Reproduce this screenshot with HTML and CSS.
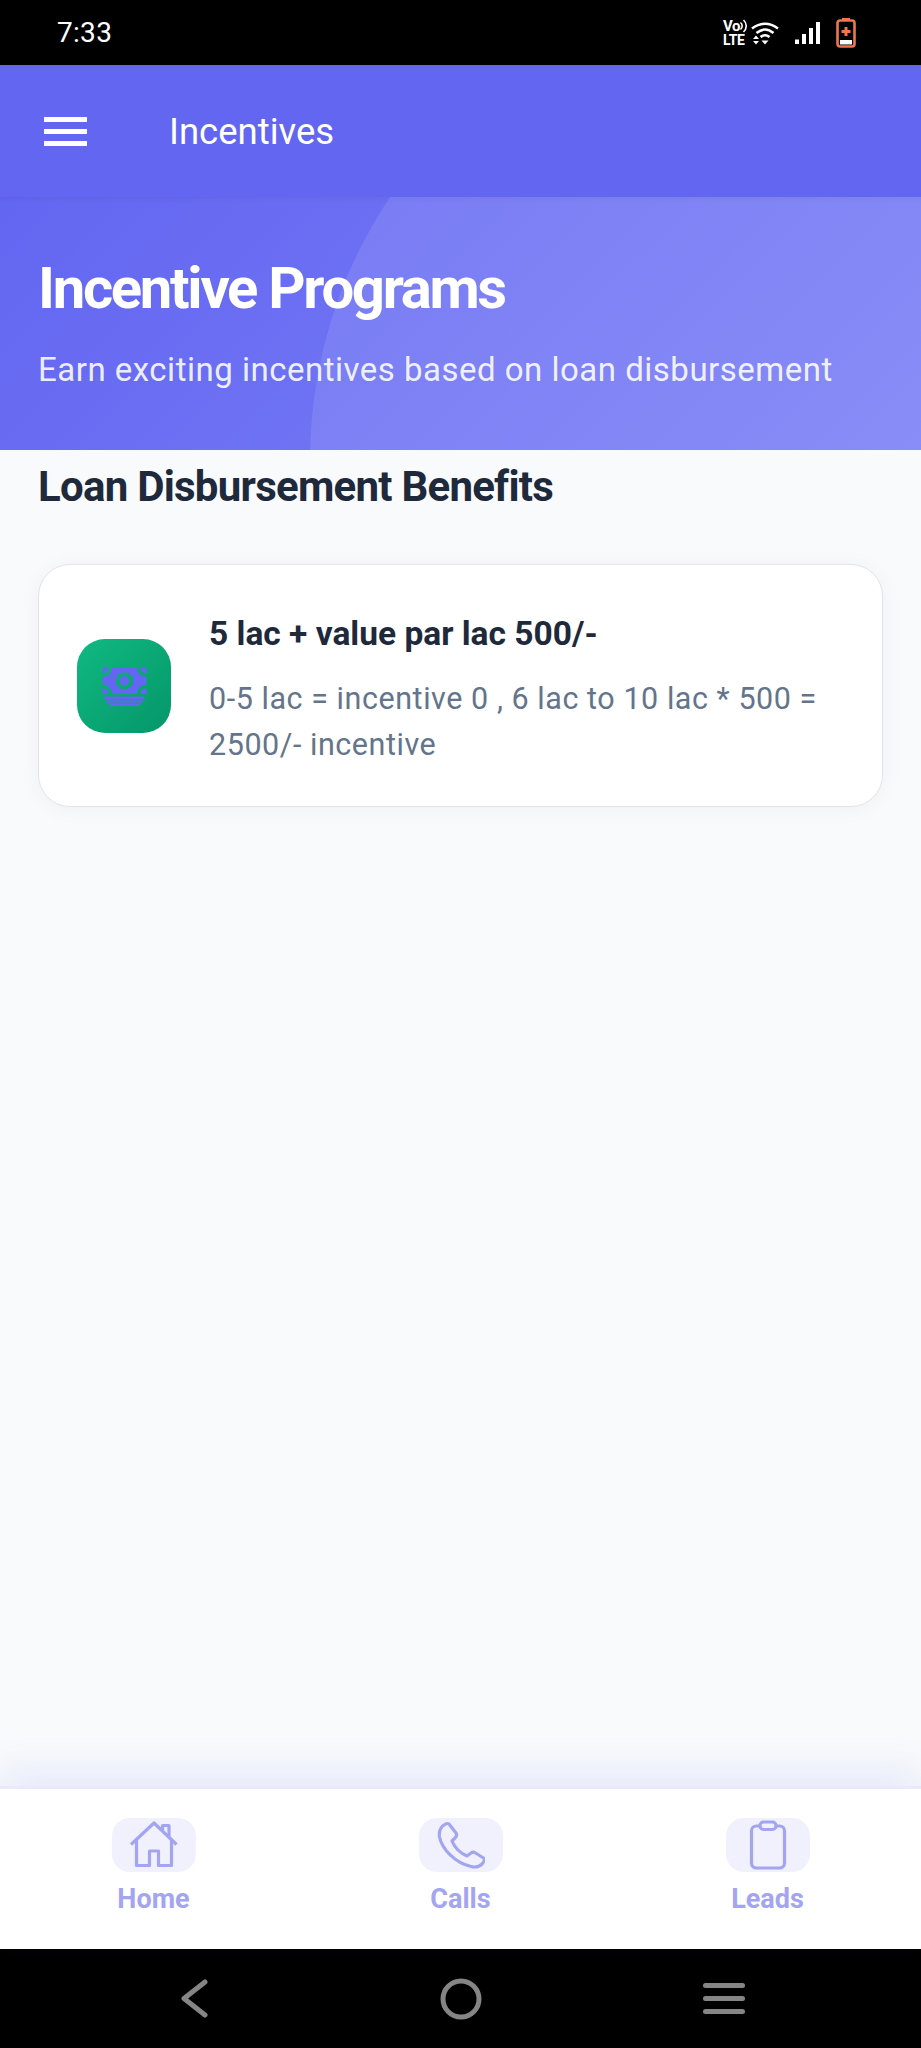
FILE: index.html
```html
<!DOCTYPE html>
<html lang="en">
<head>
<meta charset="utf-8">
<title>Incentives</title>
<link rel="stylesheet" href="styles.css">
</head>
<body>
<div class="page">
  <div class="statusbar">
    <span class="time">7:33</span>
    <div class="status-icons">
      <div class="volte"><svg class="volte-arc" width="24" height="14" viewBox="0 0 24 14"><path d="M17.500 3.500a4.500 4.500 0 0 1 0 7M20.500 1a8 8 0 0 1 0 12" fill="none" stroke="#fff" stroke-width="1.600"/></svg><span class="vo">Vo</span><span class="lte">LTE</span></div>
      <svg class="wifi" width="30" height="26" viewBox="0 0 30 26"><path d="M2 8.500Q15-1 28 8.500M6.500 13Q15 6 23.500 13M10.500 17Q15 13.500 19.500 17" fill="none" stroke="#fff" stroke-width="2.600"/><path d="M3 19l3-3.500 3 3.500zM3 21h6l-3 3.500zM11.500 20.500h7l-3.500 4z" fill="#fff"/></svg>
      <svg class="signal" width="28" height="24" viewBox="0 0 28 24"><path d="M1 18.500h4v4.500H1zM8 13h4v10H8zM15 7h4v16h-4zM22 1h4v22h-4z" fill="#fff"/></svg>
      <svg class="battery" width="20" height="31" viewBox="0 0 20 31"><path d="M6 1h8v3H6z" fill="#f0764f"/><rect x="1.500" y="3.500" width="17" height="26" rx="2.500" fill="none" stroke="#f0764f" stroke-width="2.600"/><rect x="4" y="23" width="12" height="4.500" fill="#fff"/><path d="M8.500 10h3v3h3v3h-3v3h-3v-3h-3v-3h3z" fill="#f0764f"/></svg>
    </div>
  </div>

  <header class="appbar">
    <button class="menu" aria-label="Menu"><span></span><span></span><span></span></button>
    <h1 class="appbar-title">Incentives</h1>
  </header>

  <section class="hero">
    <div class="hero-circle"></div>
    <h2 class="hero-title">Incentive Programs</h2>
    <p class="hero-sub">Earn exciting incentives based on loan disbursement</p>
  </section>

  <main class="content">
    <h3 class="section-title">Loan Disbursement Benefits</h3>
    <article class="card">
      <div class="card-icon">
        <svg width="45" height="40" viewBox="0 0 46 42">
          <path fill-rule="evenodd" fill="#6366f1" d="M0 1.500h6.500A6.500 6.500 0 0 1 0 8zM39.500 1.500H46V8a6.500 6.500 0 0 1-6.500-6.500zM0 23a6.500 6.500 0 0 1 6.500 6.500H0zM46 23v6.500h-6.500A6.500 6.500 0 0 1 46 23zM10 1.500h26A10 10 0 0 0 46 11.500v8A10 10 0 0 0 36 29.500H10A10 10 0 0 0 0 19.500v-8A10 10 0 0 0 10 1.500zM23 6.500a9 9 0 1 0 0 18 9 9 0 0 0 0-18zM23 10.500a5 5 0 1 1 0 10 5 5 0 0 1 0-10z"/>
          <path fill="#6366f1" d="M2 32h42v2.800H2zM4 36h38v2.600H4zM7 39.300h32V42H7z"/>
        </svg>
      </div>
      <div class="card-text">
        <h4 class="card-title">5 lac + value par lac 500/-</h4>
        <p class="card-desc">0-5 lac = incentive 0 , 6 lac to 10 lac * 500 = 2500/- incentive</p>
      </div>
    </article>
  </main>

  <nav class="tabbar">
    <a class="tab">
      <span class="tab-pill">
        <svg width="50" height="48" viewBox="0 0 50 48" fill="none" stroke="#a3a5f0" stroke-width="3.200" stroke-linejoin="round">
          <path d="M2 23.500 25 2l22.500 21.500"/>
          <path d="M7.500 19v25.500h13V30h9v14.500h13V19"/>
          <path d="M33.500 10V4.500H40V16.500"/>
        </svg>
      </span>
      <span class="tab-label">Home</span>
    </a>
    <a class="tab">
      <span class="tab-pill">
        <svg width="48" height="48" viewBox="0 0 48 48" fill="none" stroke="#a3a5f0" stroke-width="3.200" stroke-linejoin="round">
          <path d="M4 7c2-3 6-5.500 8-4l7 9c1 1.500 1 3-1 5l-3 3c2.500 6 8 12 15 15l4-3c1.500-1.200 3-1 4.500 0l8 5c1.500 1.500 1 3.500-1.500 6-3 3-7 3.500-11 2.500C18 42 5 28 2.500 16 2 12.500 2.500 9.500 4 7z"/>
        </svg>
      </span>
      <span class="tab-label">Calls</span>
    </a>
    <a class="tab">
      <span class="tab-pill">
        <svg width="38" height="50" viewBox="0 0 38 50" fill="none" stroke="#a3a5f0" stroke-width="3.200">
          <rect x="2.500" y="6" width="33" height="42" rx="5"/>
          <rect x="11" y="2" width="16" height="7.500" rx="3.500" fill="#f1f1fd"/>
        </svg>
      </span>
      <span class="tab-label">Leads</span>
    </a>
  </nav>

  <div class="navbar">
    <svg width="30" height="40" viewBox="0 0 30 40" fill="none" stroke="#858585" stroke-width="5" stroke-linecap="round" stroke-linejoin="round"><path d="M25 3 4 19.500 25 36"/></svg>
    <svg class="nav-home" width="42" height="42" viewBox="0 0 42 42" fill="none" stroke="#858585" stroke-width="5"><circle cx="21" cy="21" r="18"/></svg>
    <div class="nav-lines"><span></span><span></span><span></span></div>
  </div>
</div>
</body>
</html>
```
FILE: styles.css
```css
* { box-sizing: border-box; }
html, body { margin: 0; padding: 0; }
body { font-family: Roboto, "Noto Sans", sans-serif; background: #f8fafc; }

.page {
  width: 921px;
  height: 2048px;
  display: flex;
  flex-direction: column;
  overflow: hidden;
}

/* status bar */
.statusbar {
  height: 65px;
  flex: none;
  background: #000;
  display: flex;
  align-items: center;
  justify-content: space-between;
  padding: 0 65px 0 57px;
}
.time { color: #fff; font-size: 28px; letter-spacing: .3px; }
.status-icons { display: flex; align-items: center; }
.volte {
  width: 24px;
  height: 28px;
  display: flex;
  flex-direction: column;
  color: #fff;
  font-weight: 700;
  line-height: 14px;
  position: relative;
}
.volte-arc { position: absolute; left: 0; top: 0; }
.vo { font-size: 15px; letter-spacing: -.5px; }
.lte { font-size: 14px; letter-spacing: -.3px; }
.wifi { margin-left: 3px; }
.signal { margin-left: 14px; }
.battery { margin-left: 14px; }

/* app bar */
.appbar {
  height: 132px;
  flex: none;
  background: #6366f1;
  display: flex;
  align-items: center;
  padding-left: 44px;
}
.menu {
  width: 43px;
  height: 29px;
  padding: 0;
  border: 0;
  background: none;
  display: flex;
  flex-direction: column;
  justify-content: space-between;
}
.menu span { display: block; height: 5px; background: #fff; }
.appbar-title {
  margin: 0 0 0 82px;
  color: #fff;
  font-size: 36.500px;
  font-weight: 400;
}

/* hero */
.hero {
  height: 253px;
  flex: none;
  position: relative;
  overflow: hidden;
  padding: 57px 38px 0;
  background: linear-gradient(135deg, #6366f1, #7b80f6);
  box-shadow: inset 0 6px 6px -6px rgba(40, 40, 90, .12);
}
.hero-circle {
  position: absolute;
  left: 310px;
  top: -209px;
  width: 944px;
  height: 944px;
  border-radius: 50%;
  background: rgba(255, 255, 255, .1);
}
.hero-title {
  position: relative;
  margin: 0;
  color: #fff;
  font-size: 58px;
  line-height: 68px;
  font-weight: 700;
  letter-spacing: -2.300px;
}
.hero-sub {
  position: relative;
  margin: 27px 0 0;
  color: rgba(255, 255, 255, .9);
  font-size: 33px;
  line-height: 42px;
  letter-spacing: .5px;
}

/* content */
.content {
  flex: 1;
  padding: 0 38px;
  background: #f8fafc;
}
.section-title {
  margin: 13px 0 0;
  color: #1e293b;
  font-size: 42px;
  line-height: 48px;
  font-weight: 700;
  letter-spacing: -.75px;
}
.card {
  margin-top: 53px;
  height: 243px;
  display: flex;
  align-items: center;
  gap: 38px;
  padding: 10px 38px 0 38px;
  background: #fff;
  border: 1.500px solid #e2e4ea;
  border-radius: 32px;
  box-shadow: 0 2px 22px rgba(0, 0, 0, .045);
}
.card-icon {
  width: 94px;
  height: 94px;
  flex: none;
  margin-top: -10px;
  display: flex;
  align-items: center;
  justify-content: center;
  border-radius: 28px;
  background: linear-gradient(135deg, #10b981, #059669);
}
.card-text { flex: 1; }
.card-title {
  margin: 0;
  color: #1e293b;
  font-size: 33.500px;
  line-height: 40px;
  font-weight: 700;
}
.card-desc {
  margin: 22px 0 0;
  color: #64748b;
  font-size: 30.500px;
  line-height: 46px;
  letter-spacing: .55px;
}

/* tab bar */
.tabbar {
  height: 163px;
  flex: none;
  display: flex;
  padding-top: 29px;
  background: #fff;
  border-top: 3px solid #e8e9fb;
  box-shadow: 0 -16px 36px rgba(99, 102, 241, .11);
  position: relative;
}
.tab {
  flex: 1;
  display: flex;
  flex-direction: column;
  align-items: center;
}
.tab-pill {
  width: 84px;
  height: 54px;
  display: flex;
  align-items: center;
  justify-content: center;
  background: #f1f1fd;
  border-radius: 18px;
}
.tab-label {
  margin-top: 12px;
  color: #a3a5f0;
  font-size: 27px;
  line-height: 30px;
  font-weight: 700;
}

/* system nav */
.navbar {
  height: 99px;
  flex: none;
  background: #000;
  display: flex;
  align-items: center;
  justify-content: space-between;
  padding: 0 176px 0 180px;
}
.nav-home { margin-left: 8px; }
.nav-lines {
  width: 42px;
  display: flex;
  flex-direction: column;
  gap: 8px;
}
.nav-lines span {
  display: block;
  height: 5px;
  border-radius: 3px;
  background: #858585;
}
```
